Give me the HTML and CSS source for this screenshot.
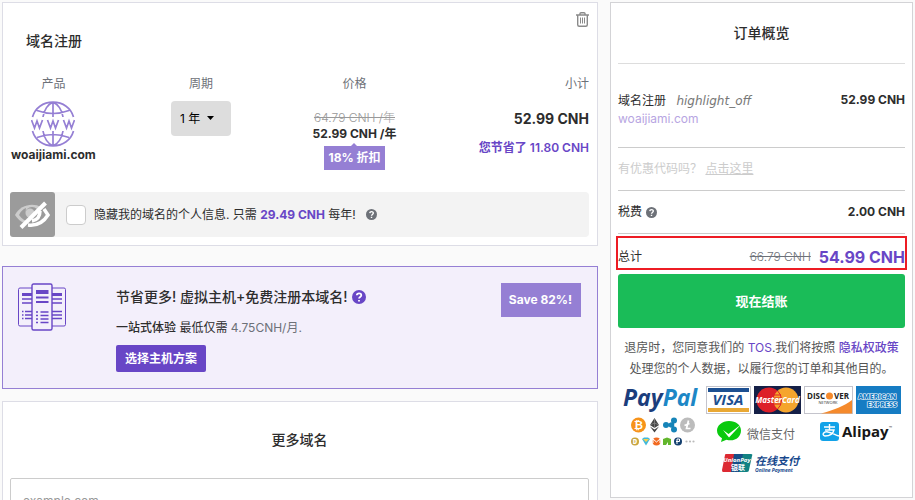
FILE: index.html
```html
<!DOCTYPE html>
<html lang="zh-CN">
<head>
<meta charset="utf-8">
<meta name="viewport" content="width=device-width, initial-scale=1">
<title>购物车</title>
<link rel="stylesheet" href="styles.css">
</head>
<body>
<div class="page">
  <main class="main">
    <section class="card product">
      <header class="product-head">
        <h2 class="heading">域名注册</h2>
        <button class="icon-button" type="button" aria-label="删除">
          <svg width="13" height="15" viewBox="0 0 13 15" fill="none" stroke="#8a8a8a"><path d="M0 3h13M4 3V1.500Q4 .7 5 .7h3q1 0 1 .8V3" stroke-width="1.400"/><path d="M1.700 3v9.800q0 1.500 1.500 1.500h6.600q1.500 0 1.500-1.500V3" stroke-width="1.400"/><path d="M4.500 5.500v6M6.500 5.500v6M8.500 5.500v6"/></svg>
        </button>
      </header>
      <table class="items">
        <thead>
          <tr><th class="col-product">产品</th><th class="col-term">周期</th><th class="col-price">价格</th><th class="col-total">小计</th></tr>
        </thead>
        <tbody>
          <tr>
            <td>
              <svg class="globe" width="44" height="46" viewBox="0 0 44 46" fill="none" stroke="#957fd4" stroke-width="1.700"><path d="M1.500 16C4 7 12 1.200 22 1.200S40 7 42.500 16M1.500 30C4 39 12 44.800 22 44.800S40 39 42.500 30M22 1v15M22 30v15M12 16C13 9 17 3 22 1.200 27 3 31 9 32 16M12 30c1 7 5 13 10 14.800C27 43 31 37 32 30M6 9.500q16 6 32 0M6 36.500q16-6 32 0"/><path d="M.5 19l3 8 2.500-7 2.500 7 3-8M16.500 19l3 8 2.500-7 2.500 7 3-8M32.500 19l3 8 2.500-7 2.500 7 3-8" stroke-width="1.700"/></svg>
              <div class="domain">woaijiami.com</div>
            </td>
            <td>
              <span class="term">
                <select class="term-select" aria-label="周期"><option>1 年</option><option>2 年</option></select>
                <svg class="term-arrow" width="7" height="4" viewBox="0 0 7 4"><path d="M0 0h7L3.500 4z" fill="#000"/></svg>
              </span>
            </td>
            <td>
              <div class="prices">
                <s class="old">64.79 CNH /年</s>
                <b>52.99 CNH /年</b>
                <span class="discount">18% 折扣</span>
              </div>
            </td>
            <td class="col-total">
              <div class="subtotal">52.99 CNH</div>
              <div class="saving">您节省了 11.80 CNH</div>
            </td>
          </tr>
        </tbody>
      </table>
      <div class="privacy">
        <svg class="privacy-icon" width="45" height="45" viewBox="0 0 45 45" fill="none"><rect width="45" height="45" rx="3" fill="#9b9b9b"/><path d="M5 23C12 10 31 9 39 23 31 36 13 36 5 23z" fill="#ccc"/><path d="M9 23c2-4 4-6 7-7-1 5 0 12 4 14-5-1-8-3-11-7z" fill="#9b9b9b"/><circle cx="22" cy="22" r="7" fill="#9b9b9b"/><circle cx="20" cy="21" r="4.500" fill="#ccc"/><path d="M36 10L11 36l11 1C31 36 36 31 40 23z" fill="#9b9b9b"/><path d="M30 19c0 6-3 9-8 10M34 17l4 6c-5 8-12 11-20 10" stroke="#fff" stroke-width="3.500"/><path d="M35.500 11L11 35.500" stroke="#fff" stroke-width="4"/></svg>
        <input class="check" type="checkbox" id="privacy">
        <label for="privacy">隐藏我的域名的个人信息. 只需 <b class="accent">29.49 CNH</b> 每年!</label>
        <svg class="help" width="11" height="11" viewBox="0 0 14 14"><circle cx="7" cy="7" r="7" fill="#6d7178"/><path d="M4.800 5.300C5 2.700 9.300 2.700 9.300 5.200 9.300 7 7 6.900 7 8.600M7 10v1.600" fill="none" stroke="#fff" stroke-width="1.800"/></svg>
      </div>
    </section>

    <section class="card promo">
      <svg class="servers" width="50" height="48" viewBox="0 0 50 48" fill="none" stroke="#6846c6"><rect x="1.500" y="5" width="18" height="38" rx="1.500" fill="#f3effb"/><rect x="30.500" y="5" width="18" height="38" rx="1.500" fill="#f3effb"/><path d="M5 11.500h10M35 11.500h10" stroke-width="3"/><path d="M5 16h10M5 20h10M35 16h10M35 20h10M8 28.500h7M8 32h7M8 35.500h7M35 28.500h10M35 32h10M35 35.500h10M5 28.500h1.500M5 32h1.500M5 35.500h1.500" stroke-width="1.300"/><rect x="15" y="1" width="20" height="46" rx="1.500" fill="#f3effb" stroke-width="1.400"/><path d="M19 9h12.500" stroke-width="4"/><path d="M19 14.500h12.500M19 19h12.500" stroke-width="2"/><path d="M23.500 29h8M23.500 32.500h8M23.500 36h8M23.500 39.500h8M19 29h2M19 32.500h2M19 36h2M19 39.500h2" stroke-width="1.300"/></svg>
      <div class="promo-body">
        <h2 class="heading promo-title">节省更多! 虚拟主机+免费注册本域名!
          <svg width="14" height="14" viewBox="0 0 14 14"><circle cx="7" cy="7" r="7" fill="#6846c6"/><path d="M4.800 5.300C5 2.700 9.300 2.700 9.300 5.200 9.300 7 7 6.900 7 8.600M7 10v1.600" fill="none" stroke="#fff" stroke-width="1.800"/></svg>
        </h2>
        <p class="promo-text"><b>一站式体验</b> 最低仅需 <span class="muted">4.75CNH/月.</span></p>
        <button class="promo-button" type="button">选择主机方案</button>
      </div>
      <span class="promo-tag">Save 82%!</span>
    </section>

    <section class="card more">
      <h2 class="heading"><label for="domain">更多域名</label></h2>
      <input class="domain-input" id="domain" type="text" placeholder="example.com">
    </section>
  </main>

  <aside class="summary">
    <h2 class="heading summary-title">订单概览</h2>
    <div class="line line-item">
      <div>
        <div class="item-name">域名注册 <i class="remove">highlight_off</i></div>
        <div class="item-domain">woaijiami.com</div>
      </div>
      <b>52.99 CNH</b>
    </div>
    <div class="line coupon"><span>有优惠代码吗？ <a href="#coupon">点击这里</a></span></div>
    <div class="line tax">
      <span class="tax-label">税费 <svg width="11" height="11" viewBox="0 0 14 14"><circle cx="7" cy="7" r="7" fill="#6d7178"/><path d="M4.800 5.300C5 2.700 9.300 2.700 9.300 5.200 9.300 7 7 6.900 7 8.600M7 10v1.600" fill="none" stroke="#fff" stroke-width="1.800"/></svg></span>
      <b>2.00 CNH</b>
    </div>
    <div class="total">
      <span>总计</span>
      <span class="total-values"><s>66.79 CNH</s><b>54.99 CNH</b></span>
    </div>
    <button class="checkout" type="button">现在结账</button>
    <p class="terms">退房时，您同意我们的 <a href="#tos">TOS</a>.我们将按照 <a class="strong" href="#privacy-policy">隐私权政策</a> 处理您的个人数据，以履行您的订单和其他目的。</p>
    <div class="pay pay-cards">
      <svg width="80" height="28" viewBox="0 0 80 28" class="brand"><text x="0" y="20" font-size="23" font-weight="700" font-style="italic" fill="#1b3d7c">Pay<tspan fill="#1d87c6">Pal</tspan></text></svg>
      <svg width="45" height="28" viewBox="0 0 45 28" class="brand"><rect x=".5" y=".5" width="44" height="27" fill="#fff" stroke="#c4c4cc"/><path d="M2 2h41v4H2z" fill="#1c4f91"/><path d="M2 22h41v4H2z" fill="#e9a834"/><text x="22" y="19" text-anchor="middle" font-size="15" font-weight="700" font-style="italic" fill="#1c4f91">VISA</text></svg>
      <svg width="47" height="28" viewBox="0 0 47 28" class="brand"><rect width="47" height="28" fill="#152047"/><circle cx="15" cy="14" r="12.500" fill="#dd2029"/><circle cx="32" cy="14" r="12.500" fill="#f5a52d"/><path d="M23.500 4.800a12.500 12.500 0 0 1 0 18.400M20 9h7M19.500 12h8M19.500 15h8M20 18h7" fill="none" stroke="#dd2029"/><text x="23.500" y="17" text-anchor="middle" font-size="8" font-weight="700" font-style="italic" fill="#fff">MasterCard</text></svg>
      <svg width="49" height="28" viewBox="0 0 49 28" class="brand"><rect x=".5" y=".5" width="48" height="27" fill="#fff" stroke="#c4c4cc"/><path d="M48 14C40 20 30 24 17 27.500H48z" fill="#f58a2c"/><circle cx="25.500" cy="10" r="3.500" fill="#f58a2c"/><text x="3" y="13" font-size="8" font-weight="700" fill="#222">DISC</text><text x="30" y="13" font-size="8" font-weight="700" fill="#222">VER</text><text x="24" y="18" text-anchor="middle" font-size="4" fill="#333">NETWORK</text></svg>
      <svg width="45" height="28" viewBox="0 0 45 28" class="brand"><rect width="45" height="28" fill="#167cc3"/><g font-size="7" font-weight="800" fill="#167cc3" stroke="#fff" stroke-width="1.200" paint-order="stroke"><text x="2" y="13">AMERICAN</text><text x="11" y="21">EXPRESS</text></g></svg>
    </div>
    <div class="pay pay-wallets">
      <svg width="64" height="30" viewBox="0 0 64 30" class="brand"><circle cx="7.500" cy="8" r="7.500" fill="#f7931a"/><text x="7.500" y="12" text-anchor="middle" font-size="11" font-weight="800" fill="#fff">₿</text><path d="M23.500 1l4.500 7-4.500 3L19 8zM19 9.500l4.500 3 4.500-3-4.500 6z" fill="#454545"/><path d="M23.500 1v10M19 8l4.500-2L28 8" fill="none" stroke="#999" stroke-width=".6"/><path d="M35 8h6l2-4M41 8l2 4" fill="none" stroke="#1684b8" stroke-width="2.500"/><circle cx="35" cy="8" r="3" fill="#1684b8"/><circle cx="40.500" cy="8" r="2.800" fill="#1684b8"/><circle cx="43" cy="3.500" r="3" fill="#1684b8"/><circle cx="43" cy="12.500" r="3" fill="#1684b8"/><circle cx="56.500" cy="8" r="7.500" fill="#bcbcbc"/><path d="M57.500 3.500l-2 8h4M53.500 8.500l5-2" fill="none" stroke="#fff" stroke-width="1.700"/><circle cx="4" cy="24.500" r="4" fill="#c9a53f"/><text x="4" y="27" text-anchor="middle" font-size="6" font-weight="800" fill="#fff">D</text><path d="M11 22l2-1.500h4l2 1.500-4 6.500z" fill="#41b9db"/><path d="M12 22h6l-3 3z" fill="#fbd04a"/><circle cx="25.500" cy="24.500" r="4" fill="#f26a21"/><path d="M22 26v-4l3.500 3 3.500-3v4" fill="none" stroke="#fff"/><path d="M32 22l4-1.500 4 1.500v6h-3v-3l-2 3h-3z" fill="#62b62c"/><circle cx="47" cy="24.500" r="4" fill="#15406f"/><path d="M46 27v-5h2.500v2.500H45" fill="none" stroke="#fff"/><circle cx="55.500" cy="24.500" r="1.100" fill="#bbb"/><circle cx="59" cy="24.500" r="1.100" fill="#bbb"/><circle cx="62.500" cy="24.500" r="1.100" fill="#bbb"/></svg>
      <svg width="81" height="30" viewBox="0 0 81 30" class="brand"><path d="M12 4C5 4 0 8.500 0 13.500c0 3.500 2 6 5 7.800L4 25l5.500-2.200C18 25 24 20 24 13.500 24 8 19 4 12 4z" fill="#09ca0e"/><path d="M6 13l5.500 4L24 7.500l-12 13z" fill="#fff"/><text x="30" y="22" font-size="12" fill="#666">微信支付</text></svg>
      <svg width="73" height="30" viewBox="0 0 73 30" class="brand"><rect y="5" width="19" height="19" rx="3" fill="#12a2e8"/><path d="M4 10h11M9.500 7v6M5 13h9c-1 4-5 6-9 6-4-1-1-5 3-4 4 .5 7 3 11 4" fill="none" stroke="#fff" stroke-width="1.400"/><text x="22" y="20" font-size="15" font-weight="700" fill="#171717">Alipay</text><text x="69" y="12" font-size="4" fill="#333">™</text></svg>
    </div>
    <div class="pay">
      <svg width="80" height="21" viewBox="0 0 80 21" class="brand"><path d="M4 1h10l-4 18H1q-1 0-1-2L3 2q0-1 1-1z" fill="#dc2932"/><path d="M12 1h10l-4 18H9z" fill="#164e88"/><path d="M21 1h8q2 0 1 2l-3 14q0 2-2 2h-8z" fill="#118283"/><text x="15" y="9" text-anchor="middle" font-size="6" font-weight="700" font-style="italic" fill="#fff">UnionPay</text><text x="16" y="17" text-anchor="middle" font-size="7" font-weight="700" fill="#fff">银联</text><text x="33" y="12" font-size="11" font-weight="700" font-style="italic" fill="#17488c">在线支付</text><text x="33" y="19" font-size="5" font-weight="700" font-style="italic" fill="#17488c">Online Payment</text></svg>
    </div>
  </aside>
</div>
</body>
</html>
```
FILE: styles.css
```css
* { box-sizing: border-box; }

html { overflow: hidden; }

body {
  margin: 0;
  background: #fafafa;
  color: #2d2d2d;
  font: 12px/16px Inter, "Noto Sans CJK SC", sans-serif;
}

h2, p { margin: 0; }

button, select, input { font: inherit; }

button { cursor: pointer; border: 0; }

a { color: #6846c6; text-decoration: none; }

svg { flex: none; }

.page {
  display: grid;
  grid-template-columns: minmax(0, 596fr) minmax(0, 303fr);
  gap: 12px;
  align-items: start;
  padding: 2px;
}

.card {
  background: #fff;
  border: 1px solid #dddde6;
}

.heading { font-size: 14px; line-height: 20px; font-weight: 500; }

.accent { color: #6846c6; }

/* Product */
.product { padding: 8px 8px 8px 7px; }

.product-head {
  display: flex;
  justify-content: space-between;
  align-items: flex-start;
  padding-left: 16px;
}

.product-head .heading { padding-top: 20px; }

.icon-button { display: flex; padding: 1px 0; background: none; }

.items {
  width: 100%;
  margin-top: 25px;
  table-layout: fixed;
  border-collapse: collapse;
  text-align: center;
  white-space: nowrap;
}

.items th { padding: 0; font-weight: 400; color: #6d7178; }

.items td { height: 100px; padding: 9px 0 0; vertical-align: top; }

.col-product { width: 15%; }
.col-term { width: 36%; }
.col-price { width: 17%; }

.items .col-total { text-align: right; }

.globe { display: block; margin: 0 auto; }

.domain { font-weight: 700; }

.term { position: relative; display: inline-block; }

.term-select {
  appearance: none;
  width: 60px;
  height: 35px;
  padding: 0 9px;
  border: 0;
  border-radius: 4px;
  background: #ddd;
  color: #000;
}

.term-arrow { position: absolute; top: 15px; right: 17px; }

.prices {
  display: flex;
  flex-direction: column;
  align-items: center;
  padding-top: 9px;
}

.prices b, .summary b { font-weight: 700; }

.old { color: #999; font-weight: 300; }

.discount {
  position: relative;
  margin-top: 4px;
  padding: 4px;
  background: #957fd4;
  color: #fff;
  font-weight: 700;
}

.discount::before {
  content: "";
  position: absolute;
  left: 50%;
  top: -3px;
  margin-left: -3px;
  border: 3px solid transparent;
  border-top: 0;
  border-bottom-color: #957fd4;
}

.subtotal { padding-top: 8px; font-size: 14px; line-height: 20px; font-weight: 700; }

.saving { margin-top: 11px; color: #6846c6; font-weight: 600; }

.privacy {
  display: flex;
  align-items: center;
  border-radius: 4px;
  background: #f3f3f3;
}

.check {
  appearance: none;
  width: 20px;
  height: 20px;
  margin: 0 8px 0 11px;
  border: 1px solid #ccc;
  border-radius: 4px;
  background: #fff;
}

.help { margin-left: 10px; }

/* Hosting promo */
.promo {
  display: flex;
  align-items: flex-start;
  margin-top: 20px;
  padding: 16px;
  border-color: #957fd4;
  background: #f3effb;
}

.servers { margin-left: -2px; }

.promo-body { flex: 1; padding: 4px 0 0 49px; }

.promo-title { display: flex; align-items: center; gap: 4px; }

.promo-text { margin: 13px 0 9px; }

.promo-text b { font-weight: 500; }

.muted { color: #6d7178; }

.promo-button {
  height: 27px;
  padding: 0 9px;
  border-radius: 2px;
  background: #6846c6;
  color: #fff;
  font-weight: 700;
}

.promo-tag {
  padding: 9px 9px 9px 8px;
  background: #957fd4;
  color: #fff;
  font-weight: 700;
}

/* More domains */
.more {
  margin-top: 12px;
  padding: 28px 8px 20px 7px;
  text-align: center;
}

.domain-input {
  display: block;
  width: 100%;
  height: 44px;
  margin-top: 28px;
  padding: 0 12px;
  border: 1px solid #ccc;
  border-radius: 2px;
}

.domain-input::placeholder { color: #999; }

/* Order summary */
.summary {
  padding: 0 7px 20px;
  border: 1px solid #d3d3d6;
  background: #fff;
}

.summary-title {
  padding: 20px 0;
  border-bottom: 1px solid #ddd;
  text-align: center;
}

.line {
  display: flex;
  justify-content: space-between;
  align-items: flex-start;
  border-bottom: 1px solid #ccc;
}

.line-item { padding: 28px 0 20px; }

.item-name { line-height: 18px; }

.item-domain { line-height: 17px; color: #b7a5e2; }

.remove { margin-left: 7px; font-family: "DejaVu Sans", sans-serif; color: #777; }

.coupon { padding: 13px 0; color: #ccc; }

.coupon a { color: #ccc; text-decoration: underline; }

.tax { padding: 13px 0; }

.tax-label { display: flex; align-items: center; gap: 4px; }

.total {
  display: flex;
  justify-content: space-between;
  align-items: center;
  height: 34px;
  margin: 2px -2px 4px;
  padding: 8px 0 0;
  border: 2px solid #ed1c24;
}

.total-values { display: flex; align-items: center; gap: 8px; }

.total s { color: #6d7178; font-weight: 300; }

.total b { color: #6846c6; font-size: 16px; }

.checkout {
  display: block;
  width: 100%;
  height: 54px;
  border-radius: 3px;
  background: #1abc58;
  color: #fff;
  font-size: 13px;
  font-weight: 700;
}

.terms {
  margin: 9px 0 7px;
  line-height: 21px;
  color: #555;
  text-align: center;
}

.terms .strong { font-weight: 500; }

/* Payment methods */
.pay {
  display: flex;
  flex-wrap: wrap;
  justify-content: center;
  margin-bottom: 3px;
}

.pay-cards { gap: 3px; }

.pay-wallets { gap: 22px; margin-bottom: 6px; }

.brand { font-family: "Open Sans", "Noto Sans CJK SC", sans-serif; overflow: visible; }
```
